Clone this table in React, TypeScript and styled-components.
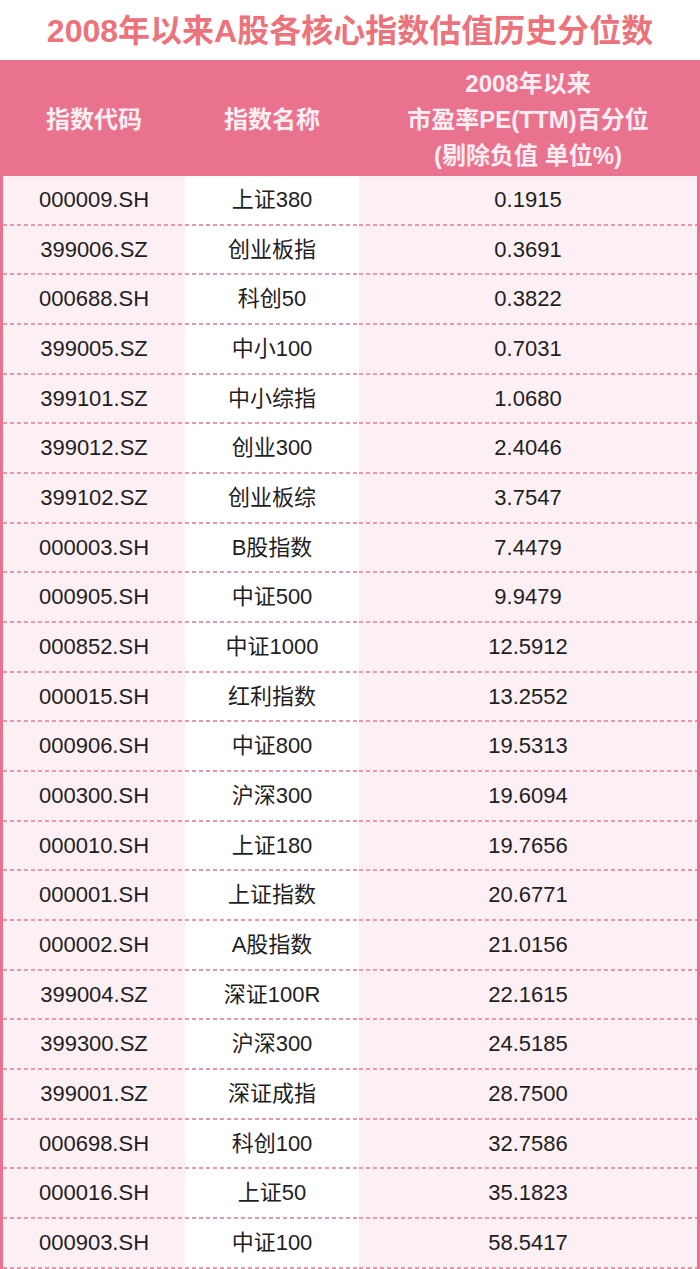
import React from 'react';
import styled, { createGlobalStyle } from 'styled-components';

const GlobalStyle = createGlobalStyle`
  html, body {
    margin: 0;
    padding: 0;
    background: #ffffff;
  }
  body {
    font-family: "Liberation Sans", "Noto Sans CJK SC", sans-serif;
  }
`;

const Page = styled.div`
  width: 700px;
  height: 1269px;
  overflow: hidden;
  background: #ffffff;
`;

const Title = styled.h1`
  margin: 0;
  height: 60px;
  display: flex;
  align-items: center;
  justify-content: center;
  font-size: 32px;
  line-height: 36px;
  font-weight: 700;
  color: #ec737b;
  white-space: nowrap;
  padding-top: 2px;
  box-sizing: border-box;
`;

const Table = styled.div`
  border-left: 3px solid #e9738f;
  border-right: 3px solid #e9738f;
`;

const Grid = styled.div`
  display: grid;
  grid-template-columns: 182px 174px 1fr;
`;

const Head = styled(Grid)`
  height: 116px;
  background: #e9738f;
`;

const HeadCell = styled.div`
  display: flex;
  align-items: center;
  justify-content: center;
  text-align: center;
  font-size: 24px;
  line-height: 36px;
  font-weight: 700;
  color: #fdeef2;
  padding-top: 4px;
`;

const Row = styled(Grid)`
  height: 49.68px;
`;

const Cell = styled.div<{ $shade: boolean }>`
  display: flex;
  align-items: center;
  justify-content: center;
  font-size: 22px;
  line-height: 24px;
  color: #1e1e1e;
  padding-bottom: 2px;
  box-sizing: border-box;
  background:
    repeating-linear-gradient(90deg, #e39aae 0 4px, transparent 4px 7px) bottom / 100% 2px no-repeat,
    ${(p) => (p.$shade ? '#fdf0f4' : '#ffffff')};
`;

const rows: [string, string, string][] = [
  ['000009.SH', '上证380', '0.1915'],
  ['399006.SZ', '创业板指', '0.3691'],
  ['000688.SH', '科创50', '0.3822'],
  ['399005.SZ', '中小100', '0.7031'],
  ['399101.SZ', '中小综指', '1.0680'],
  ['399012.SZ', '创业300', '2.4046'],
  ['399102.SZ', '创业板综', '3.7547'],
  ['000003.SH', 'B股指数', '7.4479'],
  ['000905.SH', '中证500', '9.9479'],
  ['000852.SH', '中证1000', '12.5912'],
  ['000015.SH', '红利指数', '13.2552'],
  ['000906.SH', '中证800', '19.5313'],
  ['000300.SH', '沪深300', '19.6094'],
  ['000010.SH', '上证180', '19.7656'],
  ['000001.SH', '上证指数', '20.6771'],
  ['000002.SH', 'A股指数', '21.0156'],
  ['399004.SZ', '深证100R', '22.1615'],
  ['399300.SZ', '沪深300', '24.5185'],
  ['399001.SZ', '深证成指', '28.7500'],
  ['000698.SH', '科创100', '32.7586'],
  ['000016.SH', '上证50', '35.1823'],
  ['000903.SH', '中证100', '58.5417'],
];

export default function App() {
  return (
    <Page>
      <GlobalStyle />
      <Title>2008年以来A股各核心指数估值历史分位数</Title>
      <Table>
        <Head>
          <HeadCell>指数代码</HeadCell>
          <HeadCell>指数名称</HeadCell>
          <HeadCell>
            2008年以来
            <br />
            市盈率PE(TTM)百分位
            <br />
            (剔除负值 单位%)
          </HeadCell>
        </Head>
        {rows.map(([code, name, value]) => (
          <Row key={code + name}>
            <Cell $shade>{code}</Cell>
            <Cell $shade={false}>{name}</Cell>
            <Cell $shade>{value}</Cell>
          </Row>
        ))}
      </Table>
    </Page>
  );
}
